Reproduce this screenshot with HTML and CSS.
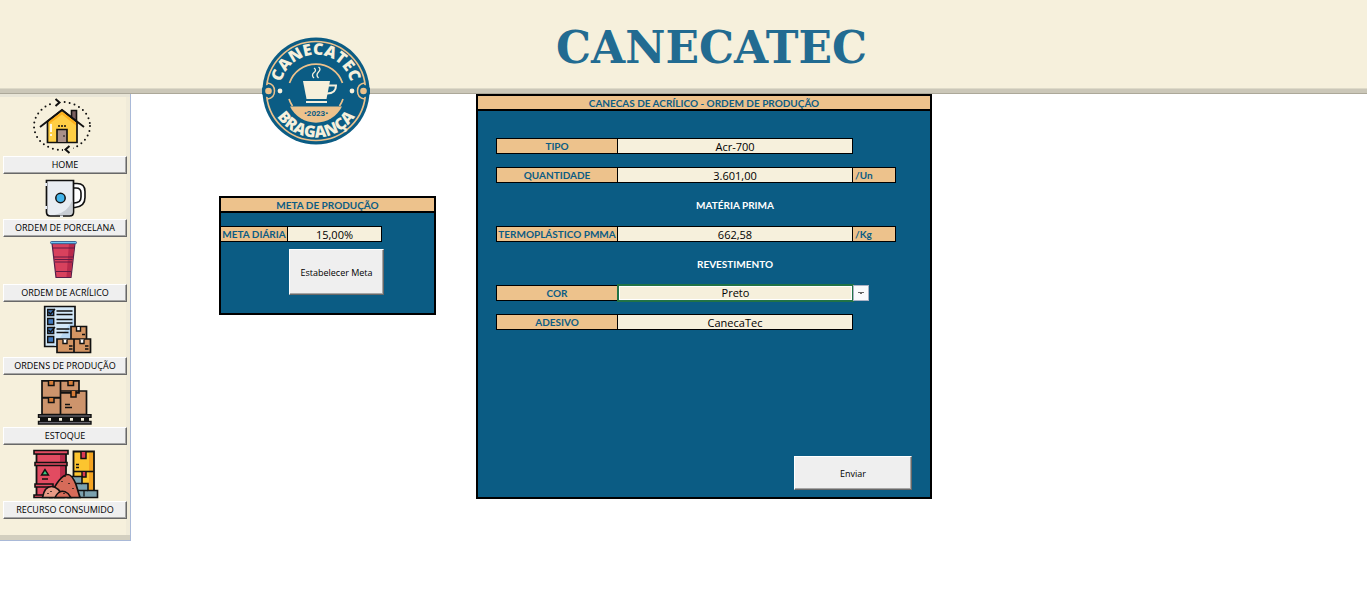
FILE: index.html
```html
<!DOCTYPE html>
<html lang="pt-BR">
<head>
<meta charset="utf-8">
<title>Canecatec</title>
<link rel="stylesheet" href="styles.css">
</head>
<body>
<header class="banner">
  <h1 class="brand">CANECATEC</h1>
  <svg class="logo" viewBox="0 0 108 108" role="img" aria-label="Canecatec Bragança 2023">
    <defs>
      <path id="arc-top" d="M20.500 65a35.500 35.500 0 1 1 67 0"/>
      <path id="arc-bottom" d="M7.500 54a46.500 46.500 0 0 0 93 0"/>
    </defs>
    <circle cx="54" cy="54" r="53.500" fill="#0b5c84"/>
    <circle cx="54" cy="54" r="49.500" fill="none" stroke="#edc28c" stroke-width="1.700"/>
    <circle cx="5.500" cy="54" r="6" fill="#0b5c84"/><circle cx="102.500" cy="54" r="6" fill="#0b5c84"/>
    <path d="M5.500 46q7 1 7 8t-7 8M102.500 46q-7 1-7 8t7 8" fill="none" stroke="#edc28c" stroke-width="1.500"/>
    <circle cx="6.500" cy="54" r="3.300" fill="#edc28c"/><circle cx="101.500" cy="54" r="3.300" fill="#edc28c"/>
    <circle cx="18" cy="54" r="2.400" fill="#f6f0dc"/><circle cx="90" cy="54" r="2.400" fill="#f6f0dc"/>
    <path d="M27.500 46a28 28 0 0 1 53 0M27 62a28 28 0 0 0 3.500 7M81 62a28 28 0 0 1-3.500 7" fill="none" stroke="#edc28c" stroke-width="1.700"/>
    <path d="M28 69.500h52a29 29 0 0 1-52 0z" fill="#edc28c"/>
    <text class="logo-year" x="54" y="78.500">•2023•</text>
    <path d="M41 44h27l-3.500 18h-20z" fill="#f6f0dc"/>
    <path d="M67 48.500h7q0 8-9 8" fill="none" stroke="#f6f0dc" stroke-width="2"/>
    <path d="M44 64h21v2h-21z" fill="#f6f0dc"/>
    <path d="M52 41q-3-3 0-5.500t0-4.500M56.500 41q-3-3 0-6t0-5" fill="none" stroke="#f6f0dc" stroke-width="1.300"/>
    <text class="logo-text"><textPath href="#arc-top" startOffset="50%">CANECATEC</textPath></text>
    <text class="logo-text"><textPath href="#arc-bottom" startOffset="50%">BRAGANÇA</textPath></text>
  </svg>
</header>
<div class="layout">
  <nav class="sidebar">
    <svg class="icon" viewBox="0 94 128 62" height="62" aria-hidden="true">
      <ellipse cx="62" cy="126" rx="28" ry="24" fill="none" stroke="#111" stroke-width="2" stroke-linecap="round" stroke-dasharray="0 5"/>
      <path d="M52 98h10v8h-10zM63 146h10v8h-10z" fill="#f6f0dc"/>
      <path d="M55.500 99l4 3.500-4 3.500M69.500 146l-4 3.500 4 3.500" fill="none" stroke="#111" stroke-width="2"/>
      <path d="M71.500 118v-7.500h5v13" fill="#7a5f60" stroke="#111" stroke-width="1.600"/>
      <path d="M47.500 142.500v-21L62 110l15 12v20.500z" fill="#ffcf45" stroke="#111" stroke-width="1.700"/>
      <path d="M49 121l13-9.500 14 11v3l-14-11-13 9.500z" fill="#fdb11d"/>
      <path d="M40 127l22-17 22 17" fill="none" stroke="#111" stroke-width="1.800"/>
      <path d="M57 142v-12.500h10V142" fill="#a99089" stroke="#111" stroke-width="1.600"/>
      <path d="M64 135v2" stroke="#111"/><path d="M58 126h8" stroke="#111" stroke-width="1.500" stroke-dasharray="2 1"/>
      <path d="M51 124v8M51 134v2" stroke="#fff" stroke-width="1.700"/>
    </svg>
    <button class="nav-button" type="button">HOME</button>
    <svg class="icon" viewBox="0 174 128 45" height="45" aria-hidden="true">
      <path d="M74 183.500h3q8 0 8 8v6q0 9-10 10h-1M74 188h2q5 0 5 5v4q0 6-7 6" fill="#fff" stroke="#111" stroke-width="1.600"/>
      <path d="M46.500 180.500h27V212q0 4-4 4h-19q-4 0-4-4z" fill="#e9edf2" stroke="#111" stroke-width="1.700"/>
      <path d="M72.500 200v12q0 3-3 3h-15q13-2 18-15z" fill="#c8cdd3"/>
      <path d="M46 183v3M46 206v3M60 216.500h3" stroke="#e9edf2" stroke-width="2"/>
      <circle cx="60.500" cy="198" r="4.700" fill="#43b4ea" stroke="#111" stroke-width="1.500"/>
    </svg>
    <button class="nav-button" type="button">ORDEM DE PORCELANA</button>
    <svg class="icon" viewBox="0 237 128 47" height="47" aria-hidden="true">
      <path d="M52 243h23l-4 34.500H56z" fill="#d8415d" stroke="#55204a" stroke-width="1.200"/>
      <path d="M69 243h5.500l-4 34h-4z" fill="#b92a4c"/>
      <path d="M53 248h21M54 257h19M54.500 259.500h18M55 262h17M56 271.500h15" stroke="#651a45" stroke-width="1"/>
      <rect x="50.500" y="241.500" width="26" height="2.200" rx="1" fill="#6fc5f2" stroke="#234b83" stroke-width=".8"/>
    </svg>
    <button class="nav-button" type="button">ORDEM DE ACRÍLICO</button>
    <svg class="icon" viewBox="0 302 128 55" height="55" aria-hidden="true">
      <path d="M44.700 306.500H75v40H44.700z" fill="#d3e8f8" stroke="#111" stroke-width="1.700"/>
      <path d="M54 346l20-28v28z" fill="#b7d7f3"/>
      <g fill="#3f78bd" stroke="#111" stroke-width="1.400"><path d="M47.700 309.500h6v6h-6zM47.700 318.500h6v6h-6zM47.700 327.500h6v6h-6zM47.700 336.500h6v6h-6z"/></g>
      <path d="M48.500 312l2 2 4.500-5M48.500 330l2 2 4.500-5M56.500 311h16M56.500 314.500h16M56.500 319.500h16M56.500 323h16M56.500 329h13M56.500 332.500h12" fill="none" stroke="#111" stroke-width="1.500"/>
      <g fill="#d39563" stroke="#111" stroke-width="1.700"><path d="M71 326.500h15.500V339H71zM57 339h17v13.500H57zM74 339h16.500v13.500H74z"/></g>
      <path d="M76.500 327v4h4v-4M63 339.500v4h4v-4M80 339.500v4h4v-4" fill="#fff" stroke="#111" stroke-width="1.400"/>
      <path d="M82 334.500h3M69 346h3.500M69 349h3.500M85 346h3.500M85 349h3.500" stroke="#111" stroke-width="1.400"/>
    </svg>
    <button class="nav-button" type="button">ORDENS DE PRODUÇÃO</button>
    <svg class="icon" viewBox="0 375 128 52" height="52" aria-hidden="true">
      <g fill="#cd946c" stroke="#111" stroke-width="1.700"><path d="M42 380.800h18.500v17H42zM60.500 380.800H79v12H60.500zM42 397.500h18.500v17H42zM60.500 391h26v23.500h-26z"/></g>
      <path d="M48.500 381v4.500h5.500V381M68 381v4.500h5.500V381M48.500 398v4.500h5.500V398M71 391v6h5v-6" fill="#d77c37" stroke="#111" stroke-width="1.500"/>
      <path d="M65 404.500h5M65 407.500h7" stroke="#111" stroke-width="1.500"/>
      <path d="M38.500 414.800H91v2.500H38.500zM38.500 421.500H91v2.500H38.500z" fill="#85838e" stroke="#111" stroke-width="1.400"/>
      <path d="M40 419.500h49" stroke="#111" stroke-width="3" stroke-dasharray="8 3"/>
    </svg>
    <button class="nav-button" type="button">ESTOQUE</button>
    <svg class="icon" viewBox="0 445 128 56" height="56" aria-hidden="true">
      <path d="M73.500 451.500H94v43H73.500z" fill="#fcc52f" stroke="#111" stroke-width="1.800"/>
      <path d="M89 453h4v40h-4z" fill="#f3a321"/>
      <path d="M73 471.500h21" stroke="#111" stroke-width="1.600"/>
      <path d="M81 452v6.500h5V452M82 472v5h4v-5" fill="#d93953" stroke="#111" stroke-width="1.500"/>
      <path d="M76 464.500h3M76 467.500h3" stroke="#111" stroke-width="1.500"/>
      <path d="M36.500 453.500H66V496H36.500z" fill="#e24b61" stroke="#111" stroke-width="1.800"/>
      <path d="M60 454h5v40h-5z" fill="#b72b49"/>
      <path d="M34 450.500h34v3.500H34zM35 462.500h32v3H35zM35 484h18v3H35zM34 495h18v2.500H34z" fill="#e34c62" stroke="#111" stroke-width="1.600"/>
      <path d="M45 469.500l-3.500 5.500h7z" fill="#39c67d" stroke="#111" stroke-width="1.400"/><path d="M42 479h6" stroke="#111" stroke-width="1.500"/>
      <path d="M72 476.500h10v7h6v7h9.500v7H68v-14z" fill="#7ca2af" stroke="#111" stroke-width="1.600"/>
      <path d="M74 483.500h8M78 490.500h10M84 490.500v6" stroke="#111" stroke-width="1.300"/>
      <path d="M50 497.500q4-11 9-17t9-6 8 10l4 13z" fill="#d66b59" stroke="#111" stroke-width="1.700"/>
      <path d="M42.500 497.500q2-11 9-11t12 11z" fill="#e79a86" stroke="#111" stroke-width="1.600"/>
      <path d="M55 497.500q5-10 13-4l3 4z" fill="#d66b59" stroke="#111" stroke-width="1.400"/>
      <path d="M65 476v1M62 481v1M69 483v1M73 488v1M48 493v1M51 491v1M64 493v1" stroke="#111" stroke-width="1.400"/>
    </svg>
    <button class="nav-button" type="button">RECURSO CONSUMIDO</button>
  </nav>
  <main class="content">
    <form class="panel goal">
      <h2 class="panel-title">META DE PRODUÇÃO</h2>
      <div class="goal-row">
        <label class="label" for="meta">META DIÁRIA</label>
        <input class="field" id="meta" value="15,00%">
      </div>
      <button class="action goal-action" type="button">Estabelecer Meta</button>
    </form>
    <form class="panel order">
      <h2 class="panel-title">CANECAS DE ACRÍLICO - ORDEM DE PRODUÇÃO</h2>
      <div class="rows">
        <div class="row"><label class="label" for="tipo">TIPO</label><input class="field" id="tipo" value="Acr-700"></div>
        <div class="row"><label class="label" for="qtd">QUANTIDADE</label><input class="field" id="qtd" value="3.601,00"><span class="unit">/Un</span></div>
        <h3 class="section">MATÉRIA PRIMA</h3>
        <div class="row"><label class="label" for="pmma">TERMOPLÁSTICO PMMA</label><input class="field" id="pmma" value="662,58"><span class="unit">/Kg</span></div>
        <h3 class="section">REVESTIMENTO</h3>
        <div class="row"><label class="label" for="cor">COR</label><select class="field selected" id="cor"><option>Preto</option></select><span class="drop" aria-hidden="true"><svg viewBox="0 0 6 3"><path d="M0 0h6v1H4v1H2V1H0z" fill="#666"/></svg></span></div>
        <div class="row"><label class="label" for="adesivo">ADESIVO</label><input class="field" id="adesivo" value="CanecaTec"></div>
      </div>
      <button class="action order-action" type="button">Enviar</button>
    </form>
  </main>
</div>
</body>
</html>
```
FILE: styles.css
```css
* { box-sizing: border-box; }
body { margin: 0; background: #fff; font-family: "Open Sans", "Noto Sans", sans-serif; }
h1, h2, h3 { margin: 0; }
button, input, select { font-family: inherit; border-radius: 0; }

.banner {
  position: relative;
  height: 94px;
  background: #f6f0dc;
  border-bottom: 1px solid #aca899;
  box-shadow: inset 0 -4px #cbc7b8, inset 0 -5px #dedac8;
}
.brand {
  padding: 22px 0 0 56px;
  text-align: center;
  font: bold 44px/52px "DejaVu Serif", serif;
  color: #226b91;
}
.logo { position: absolute; left: 262px; top: 37px; width: 108px; height: 108px; }
.logo-text { font: 800 16px "Open Sans", sans-serif; fill: #f6f0dc; text-anchor: middle; }
.logo-year { font: bold 8px Roboto, sans-serif; fill: #0b5c84; text-anchor: middle; }

.layout { display: flex; align-items: flex-start; }
.sidebar {
  display: flex;
  flex-direction: column;
  flex: none;
  width: 131px;
  padding: 0 3px 21px;
  background: #f6f0dc;
  border-top: 1px solid #9badc9;
  border-right: 1px solid #a9b9d8;
  border-bottom: 1px solid #a9b9d8;
  box-shadow: inset 0 3px #e8e5d7, inset 0 -5px #d3cfbf, inset -4px 0 #f0ebd9;
  margin-top: -1px;
}
.icon { display: block; width: 128px; margin-left: -3px; }
.nav-button, .action {
  padding: 0;
  background: #efefef;
  border: 1px solid;
  border-color: #fff #686868 #686868 #fff;
  box-shadow: inset -1px -1px #a5a5a5;
  color: #000;
}
.nav-button { height: 18px; font-size: 9px; line-height: 14px; }

.content {
  display: grid;
  flex: 1;
  grid-template-columns: minmax(0, 217fr) minmax(0, 456fr);
  column-gap: 40px;
  align-items: start;
  padding: 0 435px 0 88px;
}
.panel {
  display: flex;
  flex-direction: column;
  background: #0b5c84;
  border: 2px solid #000;
}
.panel-title {
  height: 15px;
  background: #edc28c;
  border-bottom: 2px solid #000;
  text-align: center;
}
.panel-title, .label, .section, .unit {
  font: bold 10px/14px Lato, sans-serif;
  color: #0b5c84;
  white-space: nowrap;
}
.label, .field, .unit { height: 16px; border: 1px solid #000; }
.label { background: #edc28c; text-align: center; }
.field {
  min-width: 0;
  width: 100%;
  padding: 0;
  border-left: 0;
  background: #f6f0dc;
  color: #000;
  text-align: center;
  font-size: 11px;
  line-height: 14px;
}
.unit { padding-left: 2px; border-left: 0; background: #edc28c; }

.goal { margin-top: 102px; padding-bottom: 18px; }
.goal-row {
  display: grid;
  grid-template-columns: minmax(0, 67fr) minmax(0, 94fr) minmax(0, 52fr);
  margin-top: 13px;
}
.goal-row .label { border-left: 0; }
.goal-action { align-self: center; width: 95px; height: 46px; margin: 7px 0 0 18px; font-size: 9px; }

.rows { display: flex; flex-direction: column; gap: 13px; padding: 27px 18px 0; }
.row {
  display: grid;
  grid-template-columns: minmax(0, 122fr) minmax(0, 235fr) minmax(0, 43fr) minmax(0, 16fr);
}
.section { height: 17px; padding: 2px 62px 0 124px; text-align: center; color: #fff; }
.selected {
  appearance: none;
  border: 0;
  outline: 2px solid #217346;
  outline-offset: -1px;
  box-shadow: inset 0 0 0 2px #fff;
  text-align-last: center;
}
.drop {
  display: flex;
  align-items: center;
  justify-content: center;
  width: 16px;
  height: 16px;
  border: 1px solid #aab2c4;
  background: #f9fafc;
  z-index: 1;
}
.drop svg { width: 6px; height: 3px; }
.order-action { align-self: flex-end; width: 118px; height: 34px; margin: 126px 18px 7px 0; font-size: 9px; }
```
